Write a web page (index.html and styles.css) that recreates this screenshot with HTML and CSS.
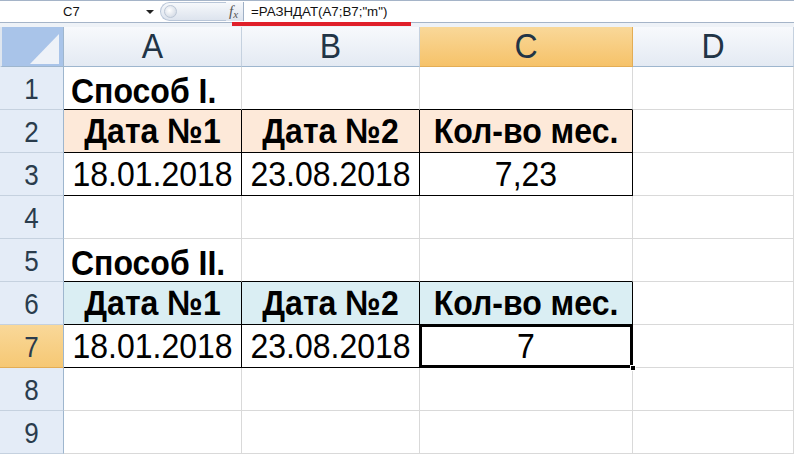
FILE: index.html
```html
<!DOCTYPE html>
<html lang="ru">
<head>
<meta charset="utf-8">
<title>РАЗНДАТ</title>
<link rel="stylesheet" href="styles.css">
</head>
<body>
<div class="app">
  <div class="fbar">
    <div class="namebox"><span class="name">C7</span><span class="dd"></span></div>
    <div class="pill"><span class="knob"></span></div>
    <div class="fx">f<span class="x">x</span></div>
    <div class="formula">=РАЗНДАТ(A7;B7;"m")</div>
  </div>
  <div class="redline"></div>
  <div class="gap"></div>
  <div class="sheet">
    <div class="corner"><svg width="62" height="39" viewBox="0 0 62 39"><polygon points="28,36 57,36 57,6" fill="#eef2f8"/></svg></div>
    <div class="ch"><span class="v">A</span></div>
    <div class="ch"><span class="v">B</span></div>
    <div class="ch sel"><span class="v">C</span></div>
    <div class="ch"><span class="v">D</span></div>

    <div class="rh"><span class="v">1</span></div>
    <div class="c left bold bb low"><span class="v">Способ I.</span></div>
    <div class="c bb"></div>
    <div class="c bb"></div>
    <div class="c"></div>

    <div class="rh"><span class="v">2</span></div>
    <div class="c t peach bold"><span class="v">Дата №1</span></div>
    <div class="c t peach bold"><span class="v">Дата №2</span></div>
    <div class="c t peach bold"><span class="v">Кол-во мес.</span></div>
    <div class="c"></div>

    <div class="rh"><span class="v">3</span></div>
    <div class="c t"><span class="v">18.01.2018</span></div>
    <div class="c t"><span class="v">23.08.2018</span></div>
    <div class="c t"><span class="v">7,23</span></div>
    <div class="c"></div>

    <div class="rh"><span class="v">4</span></div>
    <div class="c"></div>
    <div class="c"></div>
    <div class="c"></div>
    <div class="c"></div>

    <div class="rh"><span class="v">5</span></div>
    <div class="c left bold bb low"><span class="v">Способ II.</span></div>
    <div class="c bb"></div>
    <div class="c bb"></div>
    <div class="c"></div>

    <div class="rh"><span class="v">6</span></div>
    <div class="c t blue bold"><span class="v">Дата №1</span></div>
    <div class="c t blue bold"><span class="v">Дата №2</span></div>
    <div class="c t blue bold"><span class="v">Кол-во мес.</span></div>
    <div class="c"></div>

    <div class="rh sel"><span class="v">7</span></div>
    <div class="c t"><span class="v">18.01.2018</span></div>
    <div class="c t"><span class="v">23.08.2018</span></div>
    <div class="c t active"><span class="v">7</span><span class="handle"></span></div>
    <div class="c"></div>

    <div class="rh"><span class="v">8</span></div>
    <div class="c"></div>
    <div class="c"></div>
    <div class="c"></div>
    <div class="c"></div>

    <div class="rh"><span class="v">9</span></div>
    <div class="c"></div>
    <div class="c"></div>
    <div class="c"></div>
    <div class="c"></div>
  </div>
</div>
</body>
</html>
```
FILE: styles.css
```css
* { box-sizing: border-box; }
html, body { margin: 0; padding: 0; }
body {
  width: 794px;
  height: 454px;
  overflow: hidden;
  background: #fff;
  font-family: "Liberation Sans", Arial, sans-serif;
}
.app { position: relative; width: 794px; height: 454px; overflow: hidden; }

.fbar {
  height: 23px;
  display: flex;
  align-items: center;
  border-top: 1px solid #a5b4c8;
  border-bottom: 1px solid #a5b4c8;
  background: #fff;
}
.namebox {
  width: 158px;
  height: 100%;
  display: flex;
  align-items: center;
  position: relative;
}
.name {
  font-size: 13px;
  color: #111;
  margin-left: 63px;
}
.dd {
  position: absolute;
  left: 146px;
  top: 9px;
  width: 0; height: 0;
  border-left: 4px solid transparent;
  border-right: 4px solid transparent;
  border-top: 4px solid #222;
}
.pill {
  width: 66px;
  height: 19px;
  margin-left: 2px;
  border-radius: 10px 0 0 10px;
  background: linear-gradient(#f6f8fb, #dde4ee);
  border: 1px solid #b9c6d8;
  border-right: none;
  position: relative;
}
.knob {
  position: absolute;
  left: 3px; top: 2px;
  width: 13px; height: 13px;
  border-radius: 50%;
  background: radial-gradient(circle at 40% 40%, #fff, #c9d2df);
  border: 1px solid #bcc7d6;
}
.fx {
  width: 18px;
  height: 19px;
  display: flex;
  align-items: center;
  justify-content: center;
  font-family: "Liberation Serif", serif;
  font-style: italic;
  font-size: 15px;
  color: #555;
  background: linear-gradient(#f6f8fb, #dde4ee);
  border-right: 1px solid #9fb0c6;
  padding-right: 2px;
}
.fx .x { font-size: 11px; margin-top: 4px; }
.formula {
  padding-left: 7px;
  font-size: 13.3px;
  color: #111;
}
.redline {
  position: absolute;
  left: 232px;
  top: 22px;
  width: 179px;
  height: 4px;
  background: #e0202a;
}
.gap {
  height: 4px;
  background: #eef2f7;
}

.sheet {
  display: grid;
  grid-template-columns: 64px 178px 178px 213px 161px;
  grid-template-rows: 40px repeat(9, 43px);
}
.v { display: inline-block; transform: scaleY(1.1); }
.corner {
  background: #a9c4e9;
  border-right: 1px solid #9eb6ce;
  border-bottom: 1px solid #9eb6ce;
  border-left: 2px solid #dfe6ef;
  padding-top: 1px;
}
.corner svg { display: block; }
.ch {
  display: flex;
  align-items: center;
  justify-content: center;
  font-size: 32px;
  color: #213446;
  background: linear-gradient(#f7f9fc, #e4eaf3);
  border-right: 1px solid #c5d1df;
  border-bottom: 1px solid #9eb6ce;
}
.ch.sel {
  background: linear-gradient(#f9d899, #f6c269);
  border-right: 1px solid #e3ad55;
  border-bottom: 1px solid #e3ad55;
}
.rh {
  display: flex;
  align-items: center;
  justify-content: center;
  font-size: 26px;
  color: #2a3c4d;
  background: #e4ecf7;
  border-right: 1px solid #9eb6ce;
  border-bottom: 1px solid #c5d1df;
  padding-top: 2px;
}
.rh.sel {
  background: linear-gradient(#f9d899, #f6c874);
  border-bottom: 1px solid #e3ad55;
}
.c {
  display: flex;
  align-items: center;
  justify-content: center;
  font-size: 32px;
  color: #000;
  border-right: 1px solid #d9d9d9;
  border-bottom: 1px solid #d9d9d9;
  padding-top: 1px;
  white-space: nowrap;
  position: relative;
}
.c.left { justify-content: flex-start; padding-left: 7px; }
.c.low { padding-top: 6px; }
.c.bold { font-weight: bold; }
.c.bb { border-bottom-color: #000; }
.c.t { border-right-color: #000; border-bottom-color: #000; }
.peach { background: #fde9d9; }
.blue { background: #daeef3; }
.active {
  box-shadow: inset 0 0 0 2px #000, inset 0 0 0 3px #fff;
}
.handle {
  position: absolute;
  right: -4px;
  bottom: -4px;
  width: 6px;
  height: 6px;
  background: #000;
  border: 1px solid #fff;
  z-index: 2;
}
```
